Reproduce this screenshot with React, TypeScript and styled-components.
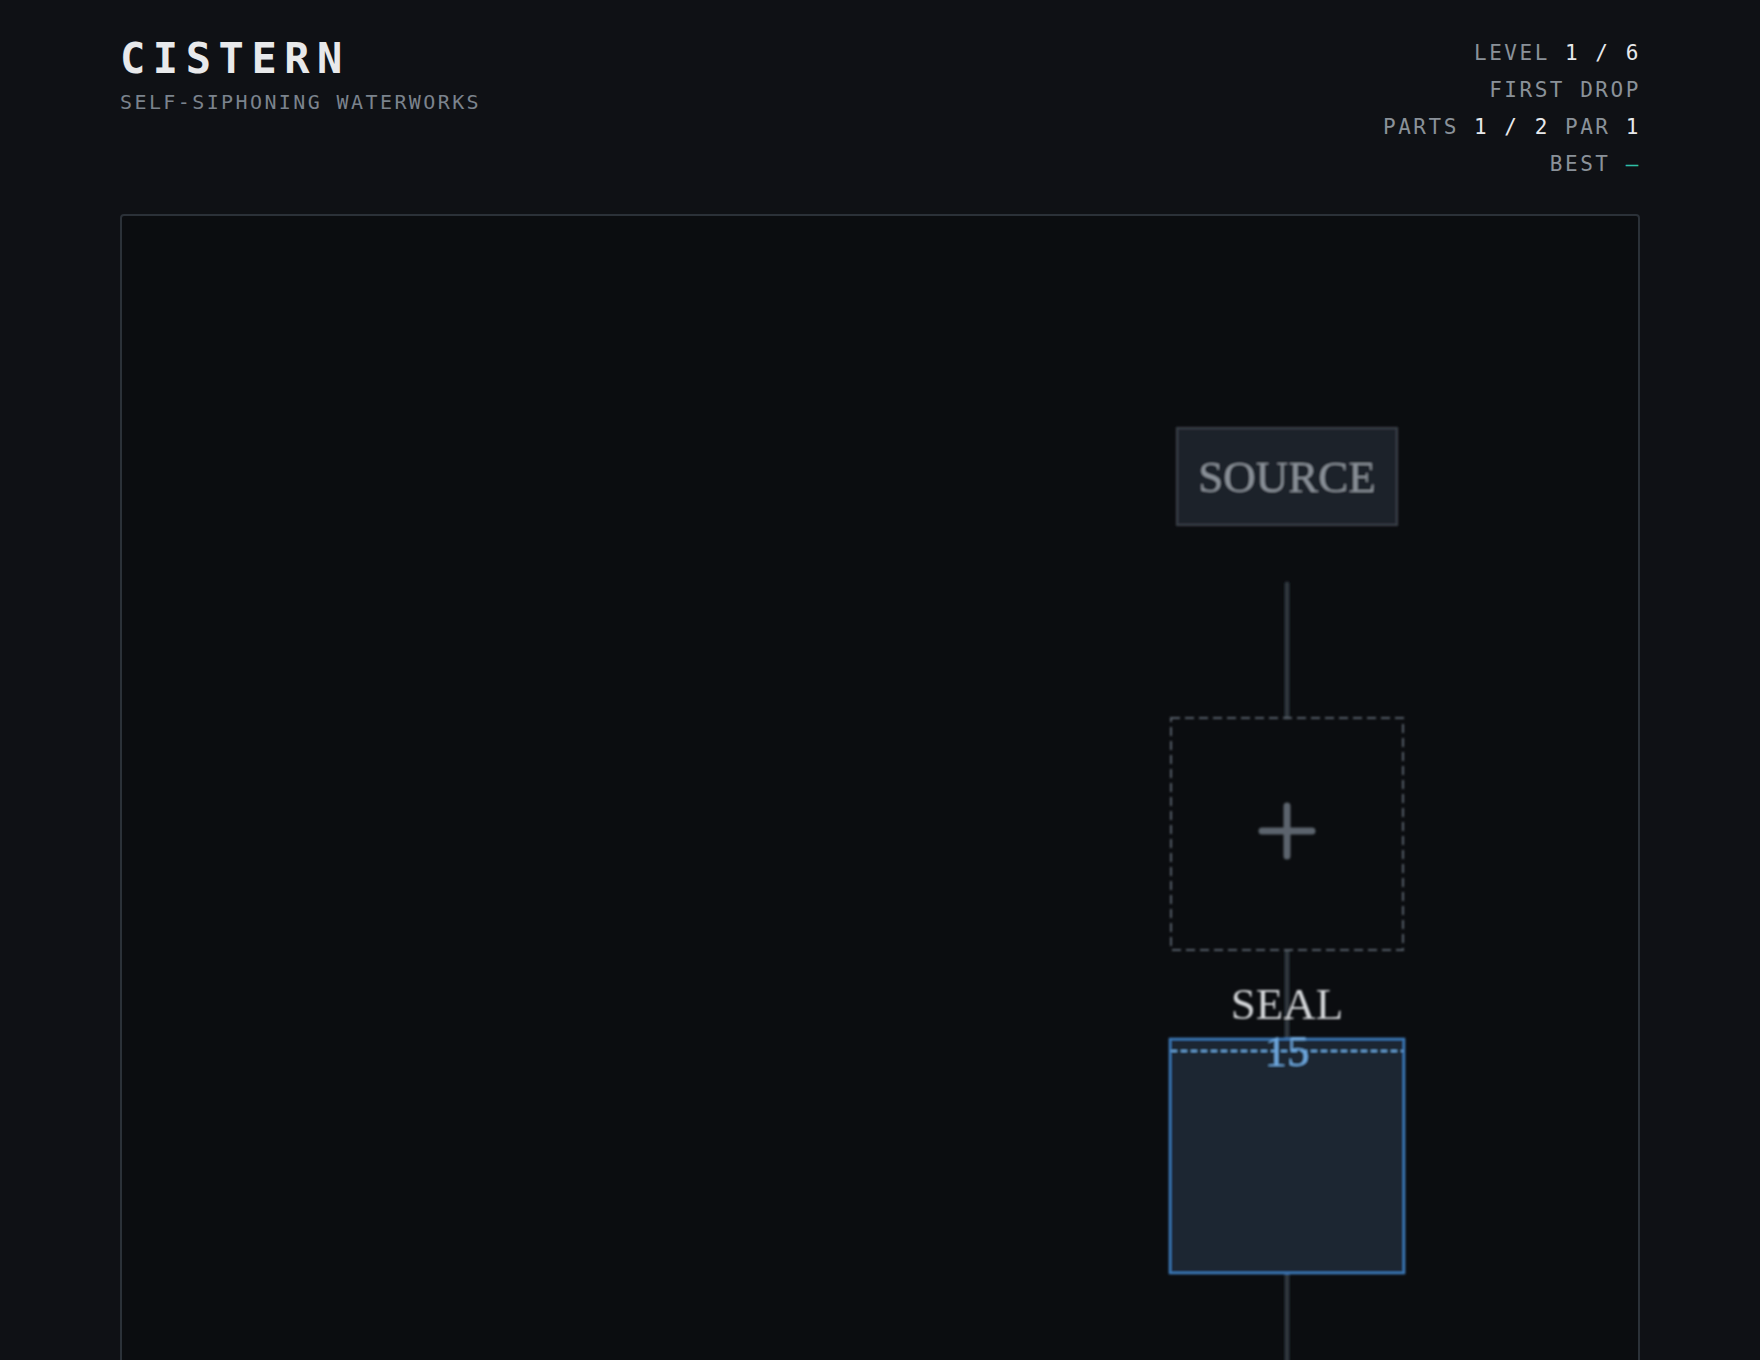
import React from 'react';
import styled, { createGlobalStyle } from 'styled-components';

const GlobalStyle = createGlobalStyle`
  html, body {
    margin: 0;
    padding: 0;
    height: 1360px;
    overflow: hidden;
    background: #0f1115;
  }
  * { box-sizing: border-box; }
`;

const MONO = `"DejaVu Sans Mono", "Liberation Mono", monospace`;
const SERIF = `"Liberation Serif", serif`;

type Kind = 'label' | 'value' | 'accent';

const kindColor: Record<Kind, string> = {
  label: '#8a9199',
  value: '#e7e9ec',
  accent: '#2fbfa6',
};

const stats: { t: string; kind: Kind }[][] = [
  [{ t: 'LEVEL ', kind: 'label' }, { t: '1 / 6', kind: 'value' }],
  [{ t: 'FIRST DROP', kind: 'label' }],
  [
    { t: 'PARTS ', kind: 'label' },
    { t: '1 / 2', kind: 'value' },
    { t: ' PAR ', kind: 'label' },
    { t: '1', kind: 'value' },
  ],
  [{ t: 'BEST ', kind: 'label' }, { t: '–', kind: 'accent' }],
];

function Board() {
  const cx = 1165;
  return (
    <BoardFrame>
      <svg width="1516" height="1300" viewBox="0 0 1516 1300">
        <defs>
          <filter id="soft" x="-5%" y="-5%" width="110%" height="110%">
            <feGaussianBlur stdDeviation="0.85" />
          </filter>
        </defs>
        <g filter="url(#soft)">
          {/* pipe runs */}
          <line x1={cx} y1={368} x2={cx} y2={501} stroke="#2d343c" strokeWidth="5" strokeLinecap="round" />
          <line x1={cx} y1={734} x2={cx} y2={1300} stroke="#2d343c" strokeWidth="5" />

          {/* source block */}
          <rect x={1055} y={212} width={220} height={97} fill="#1f242b" stroke="#3a4149" strokeWidth="2" />
          <BoardLabel x={cx} y={276} fill="#8a9199" fontSize="45">
            SOURCE
          </BoardLabel>

          {/* empty slot */}
          <rect
            x={1049}
            y={502}
            width={232}
            height={232}
            fill="none"
            stroke="#555d66"
            strokeWidth="2"
            strokeDasharray="9 5"
          />
          <path
            d={`M${cx - 25} 615 H${cx + 25} M${cx} 590 V640`}
            stroke="#5c646d"
            strokeWidth="7"
            strokeLinecap="round"
          />

          {/* seal tank */}
          <rect x={1048} y={823} width={234} height={234} fill="#1a2531" stroke="#3e7cbd" strokeWidth="2.5" />
          <line x1={1049} y1={835} x2={1281} y2={835} stroke="#6aa6dd" strokeWidth="2" strokeDasharray="6 4" />
          <BoardLabel x={cx} y={803} fill="#d3d5d8" fontSize="45">
            SEAL
          </BoardLabel>
          <BoardLabel x={cx} y={850} fill="#6ea8df" fontSize="45">
            15
          </BoardLabel>
        </g>
      </svg>
    </BoardFrame>
  );
}

export default function App() {
  return (
    <Page>
      <GlobalStyle />
      <Header>
        <Brand>
          <Title>CISTERN</Title>
          <Subtitle>SELF-SIPHONING WATERWORKS</Subtitle>
        </Brand>
        <Stats>
          {stats.map((row, i) => (
            <StatLine key={i}>
              {row.map((p, j) => (
                <Stat key={j} kind={p.kind}>
                  {p.t}
                </Stat>
              ))}
            </StatLine>
          ))}
        </Stats>
      </Header>
      <Board />
    </Page>
  );
}

const Page = styled.div`
  padding: 0 120px;
  height: 1360px;
  overflow: hidden;
  font-family: ${MONO};
`;

const Header = styled.header`
  display: flex;
  justify-content: space-between;
  align-items: flex-start;
  padding-top: 34px;
  height: 214px;
`;

const Brand = styled.div`
  display: flex;
  flex-direction: column;
`;

const Title = styled.h1`
  margin: 0;
  font-size: 42px;
  line-height: 50px;
  font-weight: 700;
  letter-spacing: 0.18em;
  color: #e8e9eb;
`;

const Subtitle = styled.div`
  margin-top: 6px;
  font-size: 20px;
  line-height: 24px;
  letter-spacing: 0.12em;
  color: #7b838d;
`;

const Stats = styled.div`
  display: flex;
  flex-direction: column;
  align-items: flex-end;
  padding-top: 1px;
`;

const StatLine = styled.div`
  font-size: 21px;
  line-height: 37px;
  letter-spacing: 0.12em;
  margin-right: -0.04em;
  white-space: pre;
`;

const Stat = styled.span<{ kind: Kind }>`
  color: ${p => kindColor[p.kind]};
`;

const BoardLabel = styled.text`
  font-family: ${SERIF};
  text-anchor: middle;
`;

const BoardFrame = styled.div`
  height: 1400px;
  border: 2px solid #2b3138;
  border-radius: 4px;
  background: #0b0d10;
  overflow: hidden;

  svg {
    display: block;
  }
`;
